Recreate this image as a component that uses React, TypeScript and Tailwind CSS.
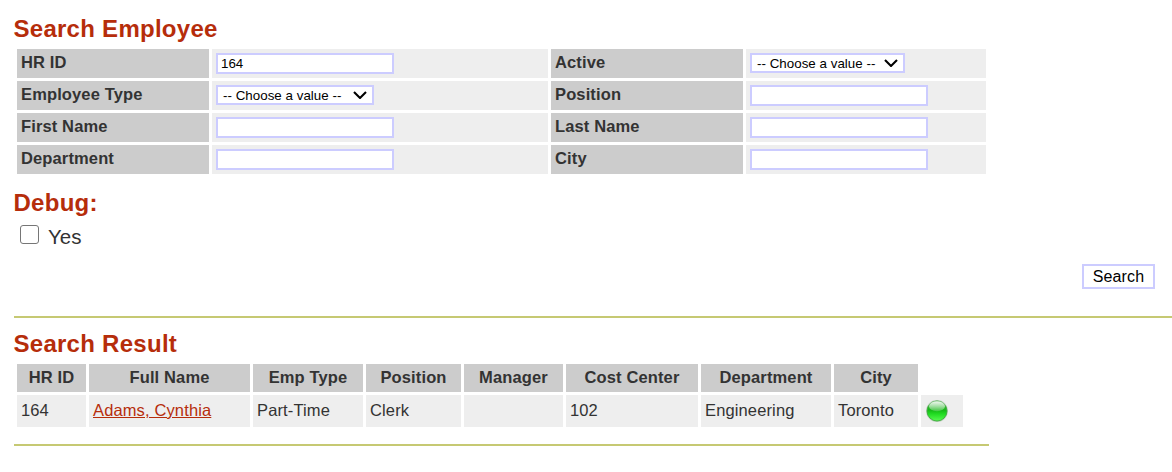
import React from "react";

const inputClass =
  "block h-[21px] w-[178px] rounded-none border-2 border-[#ccccff] bg-white px-[3px] text-[13.333px] leading-[17px] text-black outline-none";

function Heading({ children }: { children: React.ReactNode }) {
  return (
    <h2 className="-ml-[0.5px] h-7 text-[24px] leading-7 font-bold tracking-[0.27px] whitespace-nowrap text-[#b62d0b]">{children}</h2>
  );
}

function Label({ children }: { children: React.ReactNode }) {
  return (
    <div className="h-[29px] bg-[#cccccc] pl-1 text-[16.5px] leading-[27px] font-bold tracking-[0.13px] whitespace-nowrap text-[#333333]">
      {children}
    </div>
  );
}

function Field({ children }: { children: React.ReactNode }) {
  return <div className="h-[29px] bg-[#eeeeee] pt-1 pl-1">{children}</div>;
}

function Choice({ wide = false }: { wide?: boolean }) {
  return (
    <div
      className={`${wide ? "w-[158px]" : "w-[155px]"} flex h-5 items-center justify-between border-2 border-[#ccccff] bg-white pr-[5px] pl-[5px] text-black`}
    >
      <span className="pt-px text-[13.333px] leading-4 tracking-[0.03px] whitespace-nowrap">-- Choose a value --</span>
      <svg width="14" height="8" viewBox="0 0 14 8" fill="none" stroke="#000" strokeWidth="2.1">
        <path d="M1 1 L7 7 L13 1" />
      </svg>
    </div>
  );
}

function Orb() {
  return (
    <svg width="22" height="22" viewBox="0 0 22 22" className="block">
      <defs>
        <linearGradient id="orb" x1="0" y1="0" x2="0" y2="1">
          <stop offset="0" stopColor="#58b858" />
          <stop offset="0.45" stopColor="#16b816" />
          <stop offset="0.65" stopColor="#22dc22" />
          <stop offset="1" stopColor="#58fa50" />
        </linearGradient>
        <linearGradient id="gloss" x1="0" y1="0" x2="0" y2="1">
          <stop offset="0" stopColor="#fff" stopOpacity="0.9" />
          <stop offset="1" stopColor="#fff" stopOpacity="0.2" />
        </linearGradient>
      </defs>
      <circle cx="11" cy="11" r="10.9" fill="#8fb38f" opacity="0.55" />
      <circle cx="11" cy="11" r="10" fill="url(#orb)" stroke="#35a833" strokeWidth="0.8" />
      <ellipse cx="11" cy="6.2" rx="8" ry="5" fill="url(#gloss)" />
    </svg>
  );
}

const headers = ["HR ID", "Full Name", "Emp Type", "Position", "Manager", "Cost Center", "Department", "City"];
const cellClass = "h-8 bg-[#eeeeee] pl-1 text-[16.5px] leading-[31px] tracking-[0.13px] whitespace-nowrap";

export default function App() {
  return (
    <main className="h-[472px] overflow-hidden bg-white pt-[15px] pl-[14px] font-['Liberation_Sans',Arial,sans-serif] text-[#333333]">
      <Heading>Search Employee</Heading>
      <section className="mt-[6px] ml-[3px] grid w-[969px] grid-cols-[192px_336px_192px_240px] gap-[3px]">
        <Label>HR ID</Label>
        <Field><input aria-label="HR ID" defaultValue="164" className={inputClass} /></Field>
        <Label>Active</Label>
        <Field><Choice /></Field>
        <Label>Employee Type</Label>
        <Field><Choice wide /></Field>
        <Label>Position</Label>
        <Field><input aria-label="Position" className={inputClass} /></Field>
        <Label>First Name</Label>
        <Field><input aria-label="First Name" className={inputClass} /></Field>
        <Label>Last Name</Label>
        <Field><input aria-label="Last Name" className={inputClass} /></Field>
        <Label>Department</Label>
        <Field><input aria-label="Department" className={inputClass} /></Field>
        <Label>City</Label>
        <Field><input aria-label="City" className={inputClass} /></Field>
      </section>

      <div className="mt-[15px]"><Heading>Debug:</Heading></div>
      <label className="mt-[6px] ml-[6px] flex h-7 items-start">
        <input type="checkbox" className="mt-[2px] h-[19px] w-[19px] appearance-none rounded-[3px] border border-[#767676] bg-white" />
        <span className="ml-[9px] text-[20.5px] leading-7">Yes</span>
      </label>

      <div className="mt-[13px] flex justify-end pr-[17px]">
        <button className="h-[25px] w-[73px] border-2 border-[#ccccff] bg-white text-[16px] leading-5 tracking-[0.1px] text-black">Search</button>
      </div>
      <hr className="mt-[27px] h-[2px] border-0 bg-[#c6c973]" />

      <div className="mt-3"><Heading>Search Result</Heading></div>
      <section className="mt-[6px] ml-[3px] grid w-[946px] grid-cols-[69px_161px_110px_95px_99px_132px_130px_84px_42px] gap-[3px]">
        {headers.map((text) => (
          <div key={text} className="h-7 bg-[#cccccc] text-center text-[16.5px] leading-[27px] font-bold tracking-[0.13px] whitespace-nowrap">
            {text}
          </div>
        ))}
        <div />
        <div className={cellClass}>164</div>
        <div className={cellClass}><a className="text-[#b62d0b] underline">Adams, Cynthia</a></div>
        <div className={cellClass}>Part-Time</div>
        <div className={cellClass}>Clerk</div>
        <div className={cellClass} />
        <div className={cellClass}>102</div>
        <div className={cellClass}>Engineering</div>
        <div className={cellClass}>Toronto</div>
        <div className="h-8 bg-[#eeeeee] pt-[5px] pl-[5px]"><Orb /></div>
      </section>
      <hr className="mt-[17px] h-[2px] w-[975px] border-0 bg-[#c6c973]" />
    </main>
  );
}
